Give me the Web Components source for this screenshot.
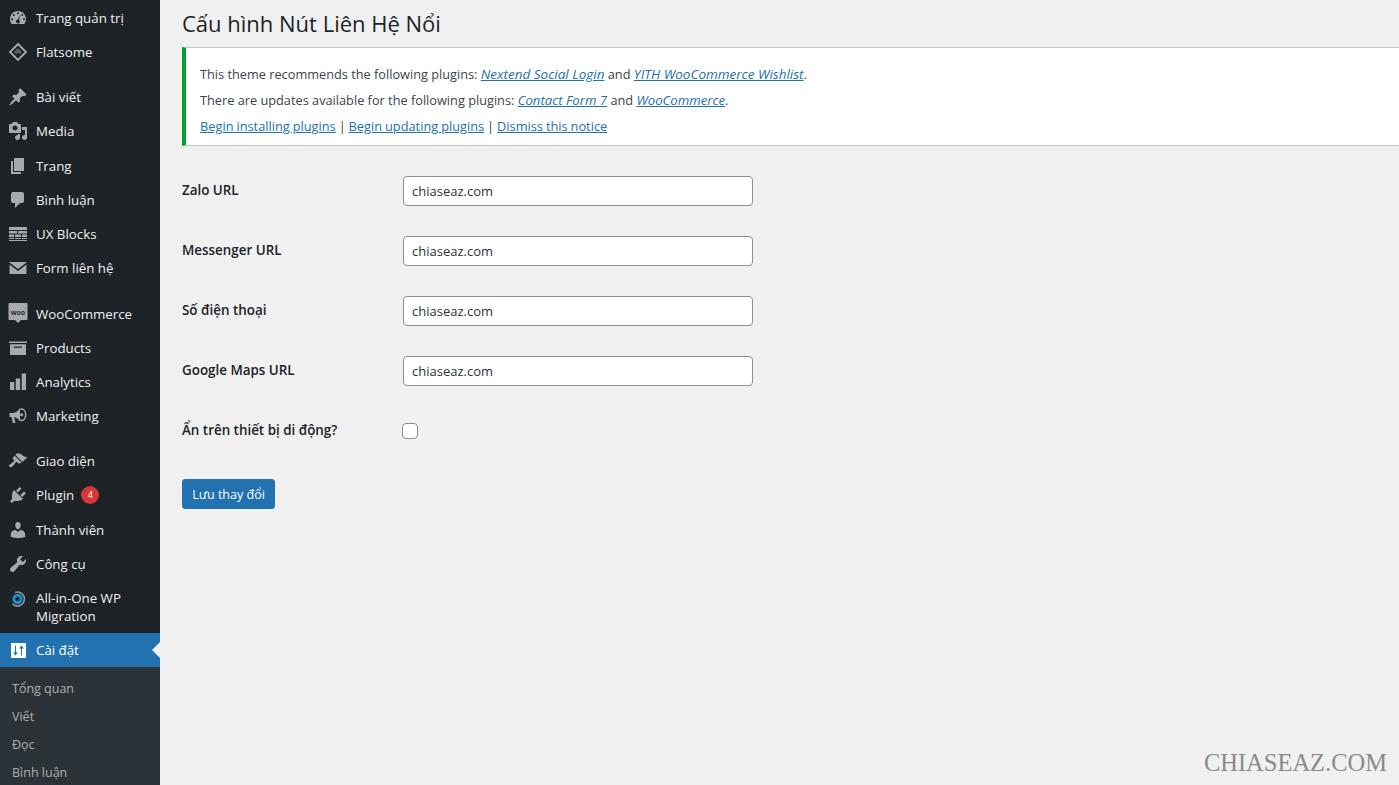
<!DOCTYPE html>
<html lang="vi">
<head>
<meta charset="utf-8">
<title>Cấu hình Nút Liên Hệ Nổi</title>
<style>
    html, body { margin: 0; height: 100%; overflow: hidden; }
    body {
        background: #f0f0f1;
        font-family: "Open Sans", "Noto Sans", sans-serif;
        color: #1d2327;
    }
    plugin-notice a { color: #2271b1; text-decoration: underline; }
    plugin-notice em { font-size: 13.5px; }
    plugin-notice p:nth-child(2) em { font-size: 13.2px; }
    plugin-notice p:last-child { font-size: 12.8px; word-spacing: -.4px; }
</style>
</head>
<body>
<admin-page>
    <admin-sidebar slot="sidebar">
        <menu-item icon="dashboard">Trang quản trị</menu-item>
        <menu-item icon="flatsome">Flatsome</menu-item>
        <menu-separator></menu-separator>
        <menu-item icon="post">Bài viết</menu-item>
        <menu-item icon="media">Media</menu-item>
        <menu-item icon="page">Trang</menu-item>
        <menu-item icon="comment">Bình luận</menu-item>
        <menu-item icon="blocks">UX Blocks</menu-item>
        <menu-item icon="mail">Form liên hệ</menu-item>
        <menu-separator></menu-separator>
        <menu-item icon="woo">WooCommerce</menu-item>
        <menu-item icon="archive">Products</menu-item>
        <menu-item icon="chart">Analytics</menu-item>
        <menu-item icon="megaphone">Marketing</menu-item>
        <menu-separator style="height: 10.8px"></menu-separator>
        <menu-item icon="brush">Giao diện</menu-item>
        <menu-item icon="plugin" count="4" style="min-height: 34.85px">Plugin</menu-item>
        <menu-item icon="users">Thành viên</menu-item>
        <menu-item icon="tools">Công cụ</menu-item>
        <menu-item icon="migration">All-in-One WP Migration</menu-item>
        <menu-item icon="settings" active>Cài đặt</menu-item>
        <sub-menu>
            <sub-item>Tổng quan</sub-item>
            <sub-item>Viết</sub-item>
            <sub-item>Đọc</sub-item>
            <sub-item>Bình luận</sub-item>
        </sub-menu>
    </admin-sidebar>

    <page-title>Cấu hình Nút Liên Hệ Nổi</page-title>
    <plugin-notice>
        <p>This theme recommends the following plugins: <a href="#"><em>Nextend Social Login</em></a> and <a href="#"><em>YITH WooCommerce Wishlist</em></a>.</p>
        <p>There are updates available for the following plugins: <a href="#"><em>Contact Form 7</em></a> and <a href="#"><em>WooCommerce</em></a>.</p>
        <p><a href="#">Begin installing plugins</a> | <a href="#">Begin updating plugins</a> | <a href="#">Dismiss this notice</a></p>
    </plugin-notice>
    <form-row label="Zalo URL" value="chiaseaz.com"></form-row>
    <form-row label="Messenger URL" value="chiaseaz.com"></form-row>
    <form-row label="Số điện thoại" value="chiaseaz.com"></form-row>
    <form-row label="Google Maps URL" value="chiaseaz.com"></form-row>
    <form-row label="Ẩn trên thiết bị di động?" type="checkbox"></form-row>
    <save-button>Lưu thay đổi</save-button>
    <water-mark>CHIASEAZ.COM</water-mark>
</admin-page>

<script>
const ICONS = {
    dashboard: '<path fill-rule="evenodd" d="M3.76 16h12.48c1.1-1.37 1.76-3.11 1.76-5 0-4.42-3.58-8-8-8s-8 3.58-8 8c0 1.89.66 3.63 1.76 5zM10 4.2a1 1 0 1 1 0 2 1 1 0 0 1 0-2zM5.8 6a1 1 0 1 1 0 2 1 1 0 0 1 0-2zM14.2 6a1 1 0 1 1 0 2 1 1 0 0 1 0-2zM4 10.2a1 1 0 1 1 0 2 1 1 0 0 1 0-2zM16 10.2a1 1 0 1 1 0 2 1 1 0 0 1 0-2zM12 7l-.9 5.1c.55.4.9.9.9 1.4a2 2 0 0 1-4 0c0-1 .8-1.8 1.8-1.9z"/>',
    flatsome: '<path fill="none" stroke="currentColor" stroke-width="1.8" d="M10 2 18 10 10 18 2 10z"/><path d="M6 10 10 6l4 4-2.400 2.400L10 10.800 8.400 12.400z" opacity=".45"/>',
    post: '<path d="M10.44 3.02l1.82-1.82 6.36 6.35-1.83 1.82c-1.05-.68-2.48-.57-3.41.36l-.75.75c-.92.93-1.04 2.35-.35 3.41l-1.83 1.82-2.41-2.41-2.8 2.79c-.42.42-3.38 2.71-3.8 2.29s1.86-3.39 2.28-3.81l2.79-2.79L4.1 9.36l1.83-1.82c1.05.69 2.48.57 3.4-.36l.75-.75c.93-.92 1.05-2.35.36-3.41z"/>',
    media: '<path fill-rule="evenodd" d="M13 11V4c0-.55-.45-1-1-1h-1.67L9 1H5L3.67 3H2c-.55 0-1 .45-1 1v7c0 .55.45 1 1 1h10c.55 0 1-.45 1-1zM7 4.500c1.380 0 2.500 1.120 2.500 2.500S8.380 9.500 7 9.500 4.500 8.380 4.500 7 5.620 4.500 7 4.500zM14 6h5v10.500c0 1.380-1.120 2.500-2.500 2.500S14 17.880 14 16.500s1.120-2.500 2.500-2.500c.17 0 .34.02.5.05V9h-3V6zm-4 8.050V13h2v3.500c0 1.380-1.120 2.500-2.500 2.500S7 17.880 7 16.500 8.120 14 9.500 14c.17 0 .34.02.5.05z"/>',
    page: '<path d="M6 15V2h10v13H6zm-1 1h8v2H3V5h2v11z"/>',
    comment: '<path d="M5 2h9c1.100 0 2 .9 2 2v7c0 1.100-.9 2-2 2h-2l-5 5v-5H5c-1.100 0-2-.9-2-2V4c0-1.100.9-2 2-2z"/>',
    blocks: '<path d="M1 3h18v3H1zM1 7h8v2.500H1zM10 7h9v2.500h-9zM1 10.500h5V13H1zM7 10.500h6V13H7zM14 10.500h5V13h-5zM1 14h5v1H1zM7 14h6v1H7zM14 14h5v1h-5zM1 16h18v1H1z"/>',
    mail: '<path d="M1.500 4h17v.6L10 11 1.500 4.600zM1.500 6.500 10 13l8.500-6.500V16h-17z"/>',
    woo: '<path d="M1.500 -1h17c.6 0 1 .4 1 1v15c0 .6-.4 1-1 1H13L10 19 7 16H1.500c-.6 0-1-.4-1-1V0c0-.6.4-1 1-1z"/><text x="10" y="10.500" text-anchor="middle" font-family="Liberation Sans, sans-serif" font-size="7" font-weight="700" fill="#1d2327">woo</text>',
    archive: '<path fill-rule="evenodd" d="M1 3.500h18v1.500H1zM2 6.200h16V17H2zM6 8.500v1.200h8V8.500z"/>',
    chart: '<path d="M2 10h4.300v8H2zM7.800 6.500h4.300V18H7.800zM13.700 1.500H18V18h-4.300z"/>',
    megaphone: '<path d="M1.500 7H4c3 0 5.500-1.500 8-4v11.500C9.500 12.500 7 11.300 6 11.100L7.500 17H4.800L3.500 11H1.500z"/><ellipse cx="13.700" cy="8.800" rx="4" ry="5.700" fill="none" stroke="currentColor" stroke-width="1.500"/><circle cx="13.700" cy="8.800" r="1.600"/>',
    brush: '<path d="M14.480 11.060L7.410 3.990l1.500-1.500c.5-.56 2.300-.47 3.510.32 1.210.8 1.430 1.280 2.910 2.100 1.180.64 2.450 1.260 4.450.85zm-.71.71L6.700 4.700 4.930 6.470c-.39.39-.39 1.020 0 1.410l1.060 1.060c.39.39.39 1.030 0 1.420-.6.6-1.430 1.110-2.210 1.690-.35.26-.7.53-1.010.84C1.430 13.230.4 14.850 1.400 15.850c1 1 2.620-.03 3.960-1.370.31-.31.58-.66.84-1.010.58-.78 1.090-1.610 1.690-2.210.39-.39 1.030-.39 1.420 0l1.060 1.060c.39.39 1.020.39 1.410 0z"/>',
    plugin: '<path d="M13.110 4.360L9.870 7.600 8 5.730l3.240-3.240c.35-.34 1.050-.2 1.560.32.52.51.66 1.210.31 1.550zm-8 1.770l.91-1.120 9.010 9.010-1.190.84c-.71.71-2.630 1.160-3.820 1.160H6.140L4.900 17.260c-.59.59-1.540.59-2.120 0-.59-.58-.59-1.530 0-2.120l1.240-1.240v-3.880c0-1.130.4-3.190 1.090-3.890zm7.260 3.970l3.240-3.240c.34-.35 1.040-.21 1.550.31.52.51.66 1.210.31 1.550l-3.240 3.250z"/>',
    users: '<path d="M10 9.250c-2.270 0-2.730-3.440-2.730-3.440C7 4.020 7.820 2 9.970 2c2.160 0 2.980 2.020 2.710 3.810 0 0-.41 3.440-2.680 3.440zm0 2.570L12.720 10c2.390 0 4.520 2.330 4.520 4.530v2.490s-3.650 1.130-7.240 1.130c-3.650 0-7.240-1.130-7.240-1.130v-2.490c0-2.250 1.940-4.480 4.470-4.480z"/>',
    tools: '<path d="M16.680 9.770c-1.340 1.340-3.300 1.670-4.950.99l-5.410 6.520c-.99.99-2.590.99-3.580 0s-.99-2.590 0-3.570l6.520-5.420c-.68-1.650-.35-3.610.99-4.950 1.280-1.280 3.120-1.620 4.720-1.060l-2.890 2.890 2.820 2.820 2.860-2.870c.53 1.580.18 3.390-1.080 4.650z"/>',
    migration: '<circle cx="9.500" cy="11" r="7" fill="none" stroke="#8e969c" stroke-width="1.600" stroke-dasharray="30 14" transform="rotate(250 9.500 11)"/><circle cx="9.500" cy="11" r="3.700" fill="none" stroke="#1f8fc9" stroke-width="2.900"/>',
    settings: '<path fill-rule="evenodd" d="M3 3h15v15H3zM7 5.500v7H5l2.500 3 2.500-3H8v-7zM13 15.500h1v-7h2l-2.500-3-2.500 3h2z"/>'
};

class AdminPage extends HTMLElement {
    constructor() {
        super();
        this.attachShadow({ mode: 'open' });
        this.shadowRoot.innerHTML = `
            <style>
                :host { display: flex; height: 785px; overflow: hidden; }
                .side { flex: 0 0 160px; }
                .main { flex: 1; min-width: 0; padding-left: 22px; position: relative; }
            </style>
            <div class="side"><slot name="sidebar"></slot></div>
            <div class="main"><slot></slot></div>
        `;
    }
}

class AdminSidebar extends HTMLElement {
    constructor() {
        super();
        this.attachShadow({ mode: 'open' });
        this.shadowRoot.innerHTML = `
            <style>
                :host {
                    display: block;
                    width: 160px;
                    height: 785px;
                    overflow: hidden;
                    background: #1d2327;
                    padding-top: .5px;
                    box-sizing: border-box;
                }
            </style>
            <slot></slot>
        `;
    }
}

class MenuSeparator extends HTMLElement {
    constructor() {
        super();
        this.attachShadow({ mode: 'open' });
        this.shadowRoot.innerHTML = `<style>:host { display: block; height: 11.5px; }</style>`;
    }
}

class MenuItem extends HTMLElement {
    constructor() {
        super();
        this.attachShadow({ mode: 'open' });
    }

    connectedCallback() {
        const icon = ICONS[this.getAttribute('icon')] || '';
        const count = this.getAttribute('count');
        const badge = count ? `<span class="badge">${count}</span>` : '';
        this.shadowRoot.innerHTML = `
            <style>
                :host {
                    display: flex;
                    position: relative;
                    min-height: 34.15px;
                    box-sizing: border-box;
                    color: #f0f0f1;
                    font-size: 13.3px;
                    line-height: 18px;
                    padding: 8px 6px 8px 36px;
                }
                :host([active]) { background: #2271b1; color: #fff; }
                :host([active])::after {
                    content: "";
                    position: absolute;
                    right: 0;
                    top: 50%;
                    margin-top: -8px;
                    border: 8px solid transparent;
                    border-right-color: #f0f0f1;
                    border-left: 0;
                }
                svg {
                    position: absolute;
                    left: 8px;
                    top: 7px;
                    width: 20px;
                    height: 20px;
                    overflow: visible;
                    fill: currentColor;
                    color: #a7aaad;
                }
                :host([active]) svg { color: #fff; }
                .badge {
                    display: inline-block;
                    width: 18px;
                    height: 18px;
                    border-radius: 50%;
                    background: #d63638;
                    color: #fff;
                    font-size: 9px;
                    line-height: 18px;
                    text-align: center;
                    margin-left: 7px;
                    vertical-align: top;
                }
            </style>
            <svg viewBox="0 0 20 20">${icon}</svg>
            <span><slot></slot>${badge}</span>
        `;
    }
}

class SubMenu extends HTMLElement {
    constructor() {
        super();
        this.attachShadow({ mode: 'open' });
        this.shadowRoot.innerHTML = `
            <style>
                :host { display: block; background: #2c3338; padding: 8px 0 0; }
            </style>
            <slot></slot>
        `;
    }
}

class SubItem extends HTMLElement {
    constructor() {
        super();
        this.attachShadow({ mode: 'open' });
        this.shadowRoot.innerHTML = `
            <style>
                :host {
                    display: block;
                    height: 28px;
                    padding-left: 12px;
                    font-size: 12.5px;
                    line-height: 28px;
                    color: #c3c4c7;
                    opacity: .85;
                }
            </style>
            <slot></slot>
        `;
    }
}

class PageTitle extends HTMLElement {
    constructor() {
        super();
        this.attachShadow({ mode: 'open' });
        this.shadowRoot.innerHTML = `
            <style>
                :host {
                    display: block;
                    height: 47px;
                    font-size: 22px;
                    line-height: 46px;
                    color: #1d2327;
                }
            </style>
            <slot></slot>
        `;
    }
}

class PluginNotice extends HTMLElement {
    constructor() {
        super();
        this.attachShadow({ mode: 'open' });
        this.shadowRoot.innerHTML = `
            <style>
                :host {
                    display: block;
                    box-sizing: border-box;
                    height: 99px;
                    background: #fff;
                    border: 1px solid #c3c4c7;
                    border-left: 4px solid #00a32a;
                    border-right: 0;
                    padding: 13px 14px;
                    margin-bottom: 30px;
                    font-size: 12.750px;
                    line-height: 26px;
                    color: #3c434a;
                }
                ::slotted(p) { margin: 0; }
            </style>
            <slot></slot>
        `;
    }
}

class FormRow extends HTMLElement {
    constructor() {
        super();
        this.attachShadow({ mode: 'open' });
    }

    connectedCallback() {
        const label = this.getAttribute('label');
        const value = this.getAttribute('value') || '';
        const isCheck = this.getAttribute('type') === 'checkbox';
        const control = isCheck
            ? '<input type="checkbox">'
            : `<input type="text" value="${value}">`;
        this.shadowRoot.innerHTML = `
            <style>
                :host {
                    display: grid;
                    grid-template-columns: 221px 350px;
                    align-items: start;
                    height: 60px;
                    color: #1d2327;
                }
                label {
                    font-size: 13.400px;
                    font-weight: 600;
                    line-height: 29px;
                }
                input[type=text] {
                    box-sizing: border-box;
                    width: 350px;
                    height: 30px;
                    padding: 0 8px;
                    border: 1px solid #8c8f94;
                    border-radius: 4px;
                    background: #fff;
                    color: #2c3338;
                    font: 13px/28px "Open Sans", "Noto Sans", sans-serif;
                }
                input[type=checkbox] {
                    appearance: none;
                    box-sizing: border-box;
                    width: 16px;
                    height: 16px;
                    margin: 7px 0 0 -1px;
                    border: 1px solid #8c8f94;
                    border-radius: 4px;
                    background: #fff;
                }
            </style>
            <label>${label}</label>
            <div>${control}</div>
        `;
    }
}

class SaveButton extends HTMLElement {
    constructor() {
        super();
        this.attachShadow({ mode: 'open' });
        this.shadowRoot.innerHTML = `
            <style>
                :host { display: block; padding-top: 3px; }
                button {
                    box-sizing: border-box;
                    display: block;
                    width: 93px;
                    height: 30px;
                    padding: 1px 0 0;
                    border: 1px solid #2271b1;
                    border-radius: 3px;
                    background: #2271b1;
                    color: #fff;
                    font: 12.500px/28px "Open Sans", "Noto Sans", sans-serif;
                }
            </style>
            <button type="button"><slot></slot></button>
        `;
    }
}

class WaterMark extends HTMLElement {
    constructor() {
        super();
        this.attachShadow({ mode: 'open' });
        this.shadowRoot.innerHTML = `
            <style>
                :host {
                    position: absolute;
                    right: 12px;
                    top: 748px;
                    font-family: "Liberation Serif", serif;
                    font-size: 24.500px;
                    line-height: 30px;
                    color: #8a8a8a;
                }
            </style>
            <slot></slot>
        `;
    }
}

customElements.define('admin-page', AdminPage);
customElements.define('admin-sidebar', AdminSidebar);
customElements.define('menu-separator', MenuSeparator);
customElements.define('menu-item', MenuItem);
customElements.define('sub-menu', SubMenu);
customElements.define('sub-item', SubItem);
customElements.define('page-title', PageTitle);
customElements.define('plugin-notice', PluginNotice);
customElements.define('form-row', FormRow);
customElements.define('save-button', SaveButton);
customElements.define('water-mark', WaterMark);
</script>
</body>
</html>
